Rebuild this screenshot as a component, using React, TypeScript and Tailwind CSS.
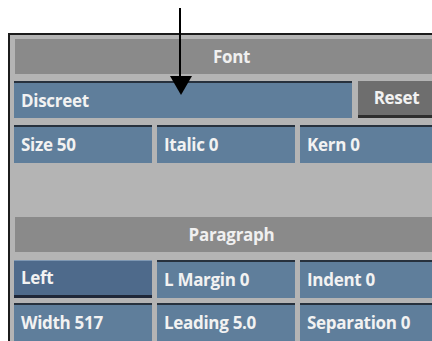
import React from "react";

const font = { fontFamily: '"Open Sans", "DejaVu Sans", sans-serif' };

function Field({ label, active }: { label: string; active?: boolean }) {
  return (
    <div
      className={`flex h-[38px] items-center px-[7px] text-[17px] font-bold tracking-[-0.3px] text-[#f2f2f2] ${
        active
          ? "bg-[#4e6a8b] border-b-[3px] border-[#1f2738] shadow-[inset_0_1px_0_#7f98b3]"
          : "bg-[#5f7e9b] border-t-[2px] border-[#27313d]"
      }`}
    >
      {label}
    </div>
  );
}

function Header({ title }: { title: string }) {
  return (
    <div className="ml-[1px] flex h-[35px] items-center justify-center bg-[#8a8a8a] text-[17px] font-bold tracking-[-0.3px] text-[#f0f0f0]">
      {title}
    </div>
  );
}

export default function App() {
  return (
    <div className="relative h-[341px] w-[432px] overflow-hidden bg-white" style={font}>
      {/* pointer arrow */}
      <div className="absolute left-[179px] top-[8px] z-10 h-[72px] w-[2px] bg-black" />
      <svg className="absolute left-[170px] top-[76px] z-10" width="22" height="19" viewBox="0 0 22 19">
        <path d="M0 0 L22 0 L11 19 Z" fill="#000" />
      </svg>

      <div className="ml-[8px] mt-[33px] w-[440px] border-l-2 border-t-2 border-[#1c1c1c] bg-[#b4b4b4] pl-[4px] pt-[4px]">
        <Header title="Font" />

        <div className="mt-[7px] flex gap-[6px]">
          <div className="flex h-[37px] w-[338px] items-center border-t-[2px] border-[#27313d] bg-[#5f7e9b] px-[7px] text-[17px] font-bold tracking-[-0.3px] text-[#f2f2f2]">
            Discreet
          </div>
          <div className="flex h-[37px] w-[79px] items-center justify-center border-b-[3px] border-r-[2px] border-[#2e2e2e] bg-[#6e6e6e] text-[17px] font-bold tracking-[-0.3px] text-[#f2f2f2]">
            Reset
          </div>
        </div>

        <div className="mt-[7px] grid grid-cols-[138px_138px_137px] gap-x-[5px]">
          <Field label="Size 50" />
          <Field label="Italic 0" />
          <Field label="Kern 0" />
        </div>

        <div className="h-[54px]" />

        <Header title="Paragraph" />

        <div className="mt-[8px] grid grid-cols-[138px_138px_137px] gap-x-[5px] gap-y-[5px]">
          <Field label="Left" active />
          <Field label="L Margin 0" />
          <Field label="Indent 0" />
          <Field label="Width 517" />
          <Field label="Leading 5.0" />
          <Field label="Separation 0" />
        </div>
      </div>
    </div>
  );
}
